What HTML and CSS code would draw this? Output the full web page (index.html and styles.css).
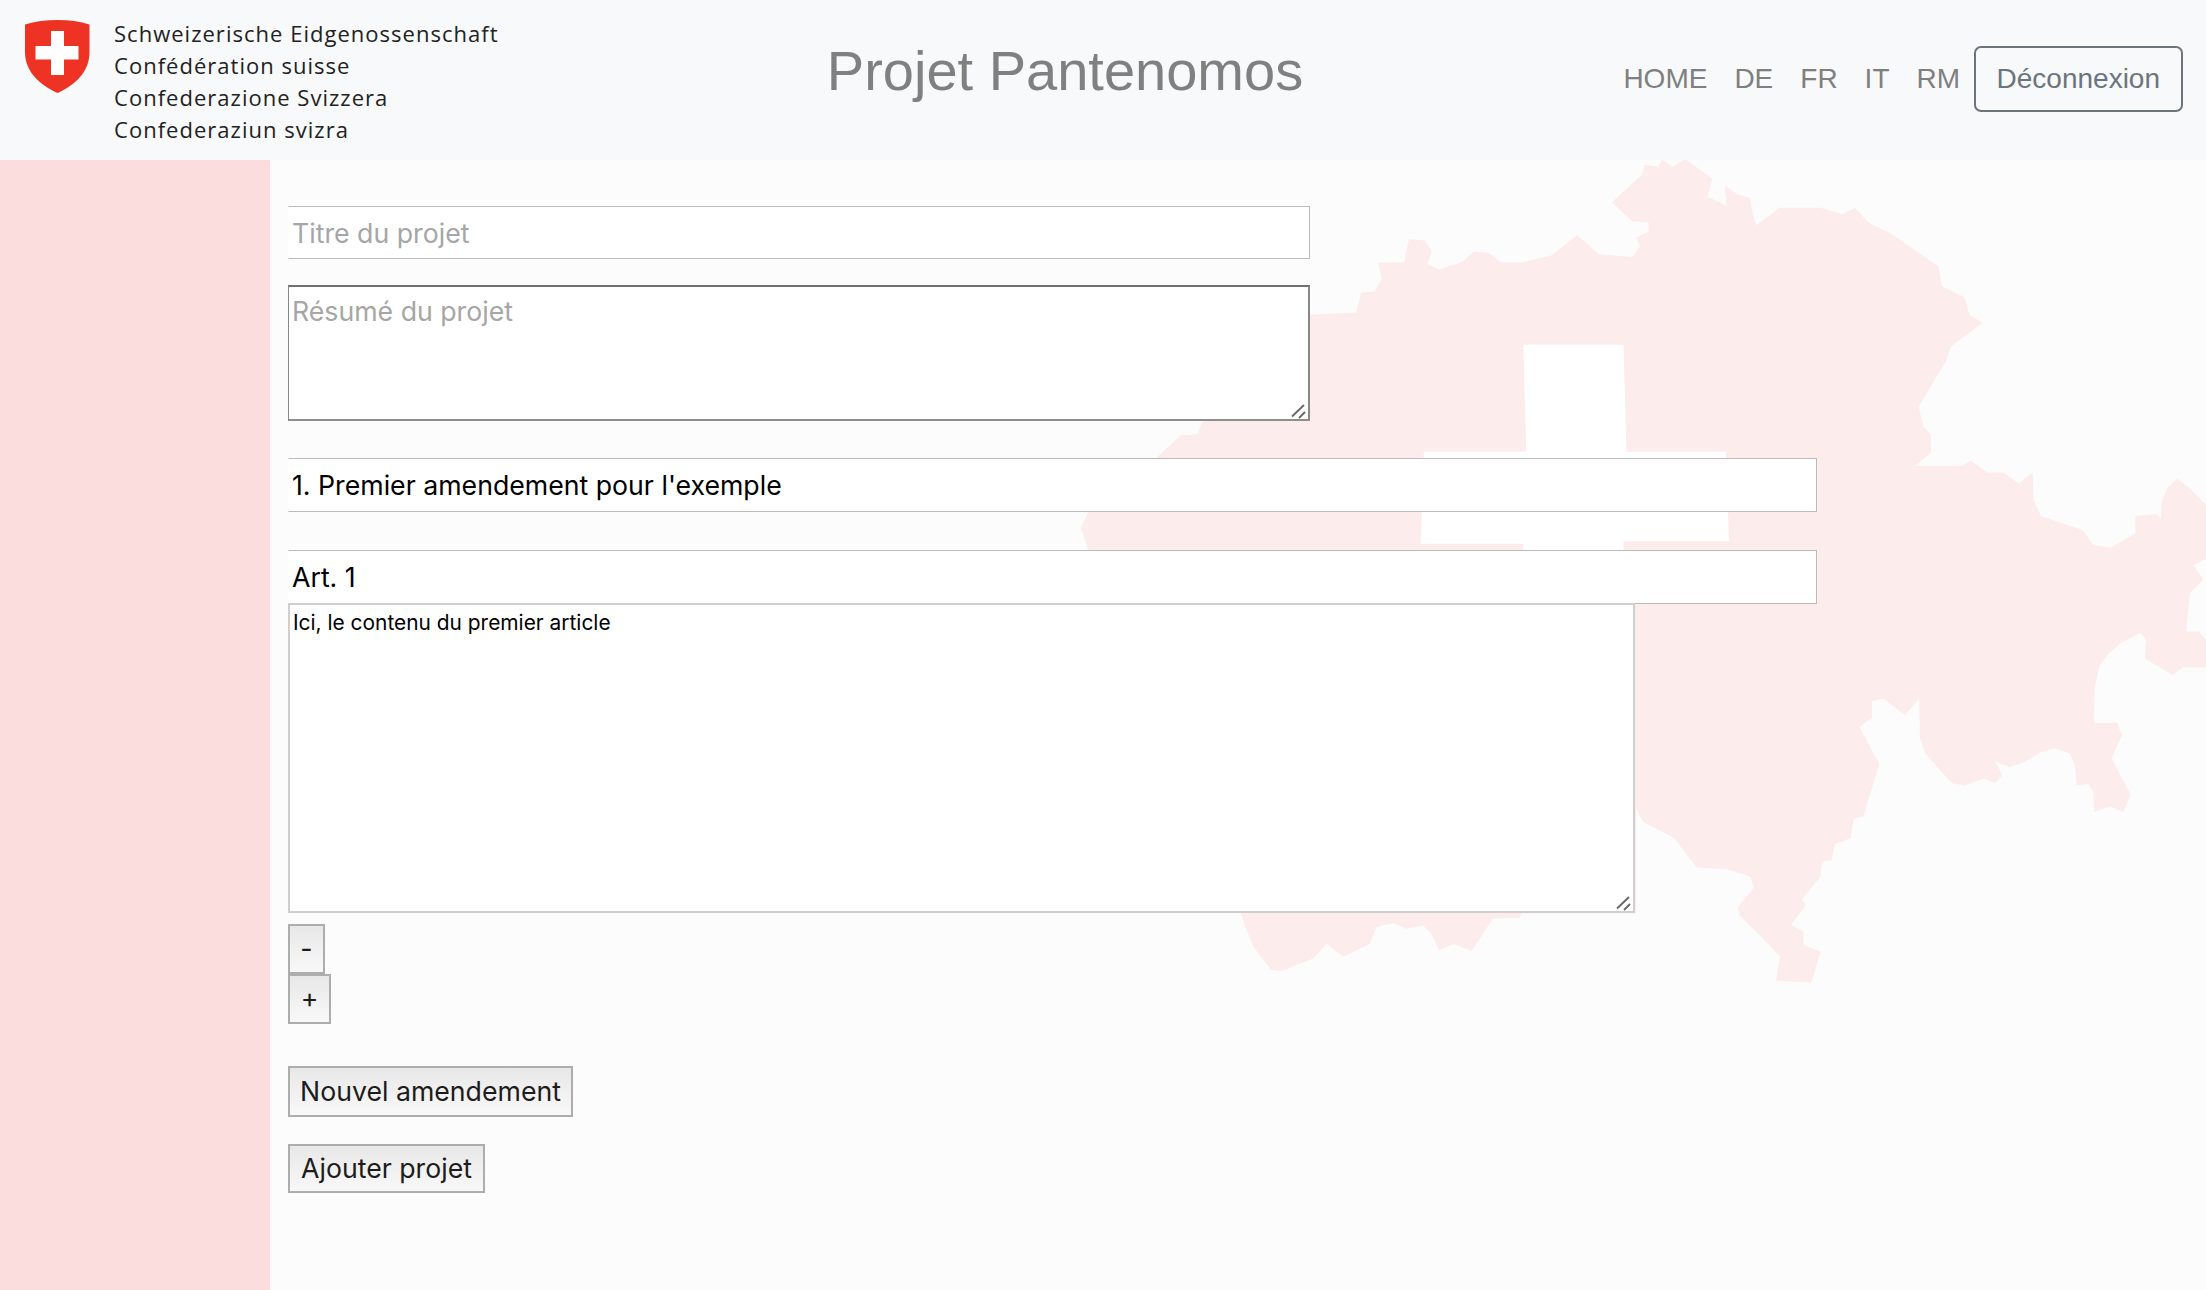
FILE: index.html
```html
<!DOCTYPE html>
<html lang="fr">
<head>
<meta charset="utf-8">
<title>Projet Pantenomos</title>
<link rel="stylesheet" href="styles.css">
</head>
<body>
<header class="topbar">
  <div class="brand">
    <svg class="shield" viewBox="0 0 65 73" aria-hidden="true">
      <path d="M0 4.5C10 1.300 21 0 32.500 0S55 1.300 64.500 4.500V32C64.500 52 50 65 32.500 73 15 65 0 52 0 32Z" fill="#ee3224"/>
      <path d="M26 11H39V26H53.500V39.500H39V55H26V39.500H10.500V26H26Z" fill="#fff"/>
    </svg>
    <div class="brand-text">
      <div>Schweizerische Eidgenossenschaft</div>
      <div>Confédération suisse</div>
      <div>Confederazione Svizzera</div>
      <div>Confederaziun svizra</div>
    </div>
  </div>
  <h1 class="page-title">Projet Pantenomos</h1>
  <nav class="nav">
    <a class="nav-link">HOME</a>
    <a class="nav-link">DE</a>
    <a class="nav-link">FR</a>
    <a class="nav-link">IT</a>
    <a class="nav-link">RM</a>
    <button class="logout" type="button">Déconnexion</button>
  </nav>
</header>
<div class="page">
  <aside class="sidebar"></aside>
  <main class="content">
    <svg class="map" viewBox="0 18 1568 1550" preserveAspectRatio="none" aria-hidden="true">
      <path fill="#fcecec" d="M830 18L845 30L862 16L898 52L892 85L918 102L915 65L932 80L950 88L952 110L958 137L990 105L1045 105L1075 117L1092 105L1110 132L1140 152L1205 212L1210 248L1240 268L1247 300L1265 315L1222 358L1215 385L1178 468L1185 505L1195 518L1195 552L1173 576L1237 576L1249 566L1271 588L1293 588L1314 608L1333 588L1334 638L1344 667L1401 693L1415 720L1439 725L1472 699L1472 667L1501 664L1507 672L1508 641L1515 617L1529 599L1546 617L1568 647L1568 745L1551 757L1564 783L1546 808L1541 878L1558 878L1568 893L1568 943L1537 943L1523 957L1485 927L1487 893L1479 880L1451 900L1436 918L1424 939L1417 979L1416 1045L1447 1044L1454 1067L1440 1109L1466 1176L1456 1207L1438 1197L1416 1207L1415 1170L1408 1156L1393 1158L1390 1121L1383 1100L1363 1091L1345 1097L1323 1115L1302 1125L1282 1115L1292 1140L1282 1154L1266 1146L1241 1159L1223 1154L1187 1100L1180 1070L1179 1000L1160 1030L1130 1000L1115 1005L1115 1035L1098 1052L1125 1120L1103 1215L1090 1220L1086 1255L1065 1265L1060 1295L1047 1297L1045 1325L1020 1365L1025 1378L1005 1413L1022 1425L1022 1450L1045 1462L1033 1518L985 1515L990 1470L965 1435L935 1395L933 1380L955 1345L950 1325L920 1312L877 1308L847 1255L805 1225L795 1200L795 1392L640 1392L637 1400L601 1401L572 1460L547 1448L528 1459L517 1428L506 1414L484 1420L466 1410L443 1416L434 1447L398 1471L375 1447L357 1474L314 1497L300 1495L276 1453L264 1413L258 1389L52 730L42 688L52 660L145 560L178 520L200 518L205 500L352 300L415 296L422 260L440 258L450 235L445 205L480 205L487 162L508 165L518 185L512 208L528 218L560 203L575 185L595 187L612 205L640 205L680 192L715 155L745 190L790 195L800 175L795 160L812 148L812 132L790 130L762 95L803 45L807 27L825 30Z"/>
      <path fill="#fff" d="M642 355H778L782 550H917L921 713H778V830H642V718H503L507 550H646Z"/>
    </svg>
    <form class="project-form">
      <input class="field field-title" type="text" placeholder="Titre du projet">
      <div class="text-box text-box-summary">
        <textarea class="summary" placeholder="Résumé du projet"></textarea>
        <svg class="grip" viewBox="0 0 18 18" aria-hidden="true"><path d="M1 14.500L13 3M8 16L14 10"/></svg>
      </div>
      <input class="field field-amend" type="text" value="1. Premier amendement pour l'exemple">
      <input class="field field-art" type="text" value="Art. 1">
      <div class="text-box text-box-article">
        <textarea class="article">Ici, le contenu du premier article</textarea>
        <svg class="grip" viewBox="0 0 18 18" aria-hidden="true"><path d="M1 14.500L13 3M8 16L14 10"/></svg>
      </div>
      <button class="btn btn-minus" type="button">-</button>
      <button class="btn btn-plus" type="button">+</button>
      <button class="btn btn-new" type="button">Nouvel amendement</button>
      <button class="btn btn-add" type="button">Ajouter projet</button>
    </form>
  </main>
</div>
</body>
</html>
```
FILE: styles.css
```css
* { box-sizing: border-box; }
html, body { margin: 0; height: 100%; }
body {
  display: flex;
  flex-direction: column;
  min-height: 1290px;
  overflow: hidden;
  background: #fcfcfc;
  font-family: "Inter", "Liberation Sans", sans-serif;
}

.topbar {
  height: 160px;
  flex: none;
  display: grid;
  grid-template-columns: 1fr auto 1fr;
  background: #f8f9fa;
}
.brand {
  display: flex;
  align-items: flex-start;
  padding: 20px 0 0 25px;
  gap: 24px;
}
.shield { width: 65px; height: 73px; flex: none; }
.brand-text {
  margin-top: -3px;
  font-family: "Open Sans", "Noto Sans", sans-serif;
  font-size: 22px;
  line-height: 32px;
  letter-spacing: 1.02px;
  color: #222;
  white-space: nowrap;
}
.page-title {
  margin: 36px 76px 0 0;
  font-family: "Liberation Sans", Arial, sans-serif;
  font-size: 56px;
  font-weight: 400;
  line-height: 70px;
  color: #808080;
  white-space: nowrap;
}
.nav {
  display: flex;
  justify-content: flex-end;
  align-items: flex-start;
  padding: 46px 23px 0 0;
  font-family: "Liberation Sans", Arial, sans-serif;
  font-size: 28px;
}
.nav-link {
  padding: 12px 13.5px;
  line-height: 42px;
  color: #7f7f7f;
}
.logout {
  height: 66px;
  padding: 0 21px;
  border: 2px solid #6c757d;
  border-radius: 7px;
  background: transparent;
  color: #6c757d;
  font: inherit;
  line-height: 42px;
}

.page { flex: 1; display: flex; min-height: 0; }
.sidebar { width: 270px; flex: none; background: #fbdddd; }
.content {
  flex: 1;
  position: relative;
  overflow: hidden;
  padding: 46px 0 0 18px;
}
.map {
  position: absolute;
  left: 780px;
  top: 0;
  width: 1156px;
  height: 850px;
}
.project-form {
  position: relative;
  display: flex;
  flex-direction: column;
  align-items: flex-start;
}

.field {
  height: 53px;
  padding: 1px 3px 0;
  border: 1px solid #bbb;
  border-left-color: #fff;
  border-radius: 0;
  background: #fff;
  color: #000;
  font-family: inherit;
  font-size: 26.7px;
  outline: none;
}
.field::placeholder { color: #a6a6a6; opacity: 1; }
.field-title { width: 1022px; }
.field-amend { width: 1529px; height: 54px; margin-top: 37px; padding: 0 3px 1px; }
.field-art { width: 1529px; height: 54px; margin-top: 38px; padding: 0 3px 1px; }

.text-box { position: relative; }
.text-box-summary { margin-top: 26px; }
.text-box-article { margin-top: -1px; }
.grip {
  position: absolute;
  right: 1px;
  bottom: 1px;
  width: 18px;
  height: 18px;
  fill: none;
  stroke: #666;
  stroke-width: 1.800;
  pointer-events: none;
}
.summary, .article {
  display: block;
  background: #fff;
  border-radius: 0;
  outline: none;
  color: #000;
  font-family: inherit;
  resize: none;
}
.summary {
  width: 1022px;
  height: 136px;
  padding: 8px 3px;
  border-style: solid;
  border-width: 2px 2px 2px 1px;
  border-color: #707070 #888 #8e8e8e #888;
  font-size: 26.7px;
}
.summary::placeholder { color: #a6a6a6; opacity: 1; }
.article {
  width: 1347px;
  height: 310px;
  padding: 5px 3px;
  border: 2px solid #cfcfcf;
  font-size: 20.9px;
}

.btn {
  display: block;
  padding: 0 0 2px;
  border: 2px solid #adadad;
  border-radius: 0;
  background: linear-gradient(#e8e8e8, #f8f8f8);
  color: #1c1c1c;
  font-family: inherit;
  font-size: 26.7px;
  text-align: center;
}
.btn-minus { height: 50px; width: 37px; margin-top: 11px; }
.btn-plus { height: 50px; width: 43px; }
.btn-new { height: 51px; width: 285px; margin-top: 42px; }
.btn-add { height: 49px; width: 197px; margin-top: 27px; }
```
